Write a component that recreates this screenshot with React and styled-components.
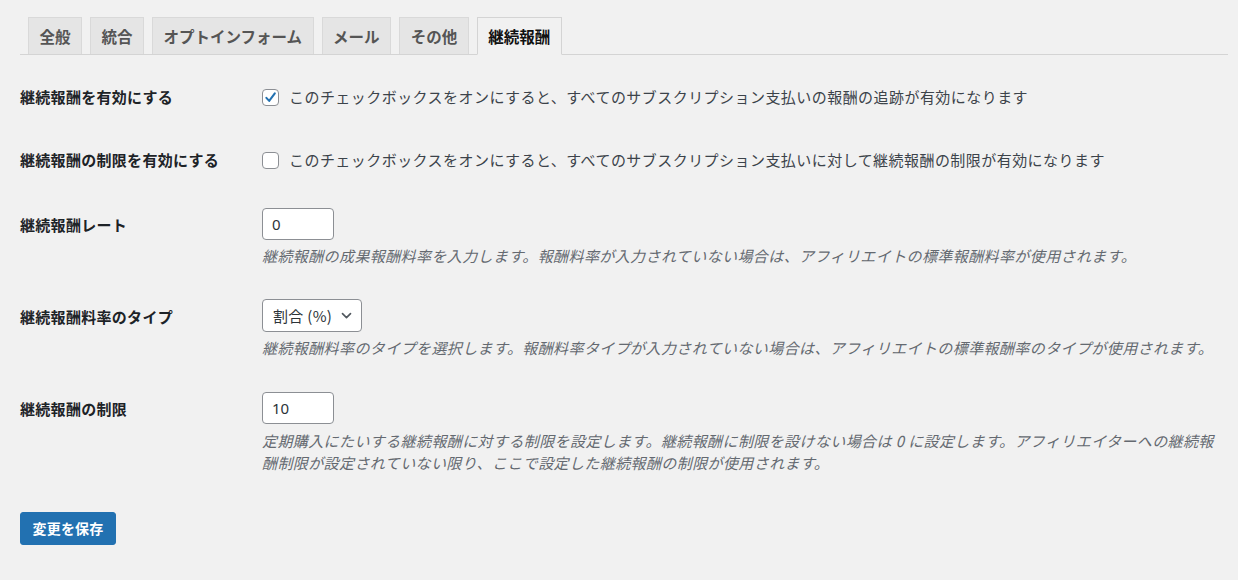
import React from "react";
import styled, { createGlobalStyle } from "styled-components";

const GlobalStyle = createGlobalStyle`
  html, body {
    margin: 0;
    padding: 0;
    background: #f1f1f1;
  }
  body {
    font-family: "Noto Sans CJK JP", "Noto Sans", sans-serif;
    color: #1d2327;
  }
`;

const Page = styled.div`
  padding: 17px 10px 0 20px;
  min-height: 563px;
`;

const TabBar = styled.nav`
  display: flex;
  padding-left: 8px;
  border-bottom: 1px solid #d4d4d4;
`;

const Tab = styled.div`
  margin-right: 8px;
  height: 37px;
  box-sizing: border-box;
  padding: 6px 10.5px 0;
  border: 1px solid ${(p) => (p.$active ? "#d4d4d4" : "#d9d9d9")};
  border-bottom: none;
  background: ${(p) => (p.$active ? "#f1f1f1" : "#e5e5e5")};
  color: ${(p) => (p.$active ? "#111" : "#555")};
  font-size: 15.5px;
  line-height: 24px;
  font-weight: 700;
  white-space: nowrap;
  ${(p) =>
    p.$active &&
    `
    margin-bottom: -1px;
    height: 38px;
    border-bottom: 1px solid #f1f1f1;
  `}
`;

const Form = styled.div`
  margin-top: 11px;
  display: flex;
  flex-direction: column;
`;

const Row = styled.div`
  display: grid;
  grid-template-columns: 242px 1fr;
  align-items: start;
  padding: ${(p) => p.$top ?? p.$pad}px 0 ${(p) => p.$pad}px;
`;

const Label = styled.div`
  font-size: 15px;
  letter-spacing: 0.3px;
  line-height: 22px;
  font-weight: 700;
  color: #1d2327;
  padding-top: ${(p) => p.$offset || 0}px;
`;

const Field = styled.div`
  display: flex;
  flex-direction: column;
  align-items: flex-start;
`;

const CheckLine = styled.label`
  display: flex;
  align-items: center;
  gap: 10px;
  height: 22px;
  font-size: 15px;
  letter-spacing: 0.45px;
  line-height: 22px;
  color: #3c434a;
`;

const Box = styled.span`
  width: 17px;
  height: 17px;
  box-sizing: border-box;
  border: 1px solid #8c8f94;
  border-radius: 4px;
  background: #fff;
  display: flex;
  align-items: center;
  justify-content: center;
  flex-shrink: 0;
`;

const TextInput = styled.div`
  width: 72px;
  height: 32px;
  box-sizing: border-box;
  border: 1px solid #8c8f94;
  border-radius: 4px;
  background: #fff;
  padding: 0 9px;
  display: flex;
  align-items: center;
  font-family: "Noto Sans", sans-serif;
  font-size: 15px;
  color: #2c3338;
`;

const SelectBox = styled.div`
  width: 100px;
  height: 33px;
  box-sizing: border-box;
  border: 1px solid #8c8f94;
  border-radius: 4px;
  background: #fff;
  padding: 0 8px 0 10px;
  display: flex;
  align-items: center;
  justify-content: space-between;
  font-size: 15px;
  letter-spacing: 0.3px;
  color: #2c3338;
`;

const Desc = styled.p`
  margin: ${(p) => p.$gap || 5}px 0 0;
  font-size: 15px;
  line-height: 22px;
  letter-spacing: 0.4px;
  font-style: italic;
  color: #646970;
  max-width: 958px;
`;

const SaveButton = styled.button`
  margin-top: 22px;
  align-self: flex-start;
  height: 33px;
  width: 96px;
  padding: 0;
  border: 1px solid #2271b1;
  border-radius: 3px;
  background: #2271b1;
  color: #fff;
  font-family: "Noto Sans CJK JP", sans-serif;
  font-size: 14px;
  font-weight: 700;
  letter-spacing: 0.2px;
  line-height: 31px;
`;

const Check = () => (
  <svg width="15" height="15" viewBox="0 0 16 16">
    <path
      d="M3.6 8.4L6.6 11.6L12.6 3.6"
      fill="none"
      stroke="#2271b1"
      strokeWidth="2.2"
      strokeLinecap="round"
      strokeLinejoin="round"
    />
  </svg>
);

const Chevron = () => (
  <svg width="13" height="13" viewBox="0 0 12 12">
    <path
      d="M2.3 4.3L6 8l3.7-3.7"
      fill="none"
      stroke="#50575e"
      strokeWidth="1.5"
      strokeLinecap="round"
      strokeLinejoin="round"
    />
  </svg>
);

const tabs = ["全般", "統合", "オプトインフォーム", "メール", "その他", "継続報酬"];

export default function App() {
  return (
    <Page>
      <GlobalStyle />
      <TabBar>
        {tabs.map((t) => (
          <Tab key={t} $active={t === "継続報酬"}>
            {t}
          </Tab>
        ))}
      </TabBar>
      <Form>
        <Row $pad={20}>
          <Label>継続報酬を有効にする</Label>
          <CheckLine>
            <Box>
              <Check />
            </Box>
            このチェックボックスをオンにすると、すべてのサブスクリプション支払いの報酬の追跡が有効になります
          </CheckLine>
        </Row>
        <Row $pad={21}>
          <Label>継続報酬の制限を有効にする</Label>
          <CheckLine>
            <Box />
            このチェックボックスをオンにすると、すべてのサブスクリプション支払いに対して継続報酬の制限が有効になります
          </CheckLine>
        </Row>
        <Row $pad={16}>
          <Label $offset={6}>継続報酬レート</Label>
          <Field>
            <TextInput>0</TextInput>
            <Desc>
              継続報酬の成果報酬料率を入力します。報酬料率が入力されていない場合は、アフィリエイトの標準報酬料率が使用されます。
            </Desc>
          </Field>
        </Row>
        <Row $pad={16}>
          <Label $offset={7}>継続報酬料率のタイプ</Label>
          <Field>
            <SelectBox>
              <span>割合 (%)</span>
              <Chevron />
            </SelectBox>
            <Desc>
              継続報酬料率のタイプを選択します。報酬料率タイプが入力されていない場合は、アフィリエイトの標準報酬率のタイプが使用されます。
            </Desc>
          </Field>
        </Row>
        <Row $pad={16} $top={17}>
          <Label $offset={6}>継続報酬の制限</Label>
          <Field>
            <TextInput>10</TextInput>
            <Desc $gap={6}>
              定期購入にたいする継続報酬に対する制限を設定します。継続報酬に制限を設けない場合は 0 に設定します。アフィリエイターへの継続報酬制限が設定されていない限り、ここで設定した継続報酬の制限が使用されます。
            </Desc>
          </Field>
        </Row>
        <SaveButton>変更を保存</SaveButton>
      </Form>
    </Page>
  );
}
